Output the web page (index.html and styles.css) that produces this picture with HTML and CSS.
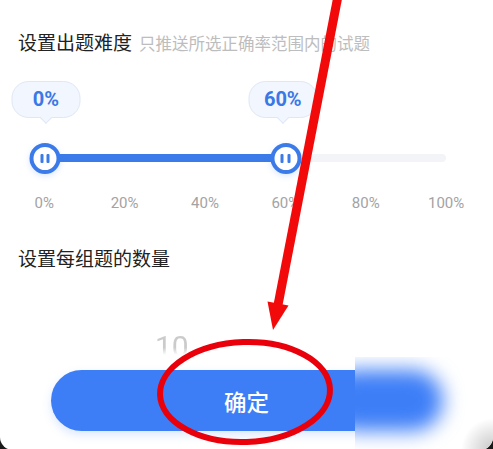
FILE: index.html
```html
<!DOCTYPE html>
<html lang="zh-CN">
<head>
<meta charset="utf-8">
<title>设置</title>
<link rel="stylesheet" href="styles.css">
</head>
<body>
<div class="sheet">
  <div class="section-head">
    <span class="h">设置出题难度</span><span class="sub">只推送所选正确率范围内的试题</span>
  </div>

  <div class="slider">
    <div class="track"><div class="fill" style="width:60%"></div></div>
    <div class="bubble" style="left:0.2%">0%</div>
    <div class="bubble" style="left:59.3%">60%</div>
    <div class="handle" style="left:0%"><i></i><i></i></div>
    <div class="handle" style="left:60%"><i></i><i></i></div>
  </div>

  <div class="ticks">
    <span>0%</span><span>20%</span><span>40%</span><span>60%</span><span>80%</span><span>100%</span>
  </div>

  <div class="section-head second">
    <span class="h">设置每组题的数量</span>
  </div>

  <div class="picker">
    <span class="num">10</span>
  </div>

  <button class="confirm">确定</button>

  <div class="patch"><div class="blob"></div></div>

  <svg class="marks" width="493" height="449" viewBox="0 0 493 449">
    <line x1="338" y1="-4" x2="278" y2="305" stroke="#f20a0a" stroke-width="9"/>
    <polygon points="273,330 288.5,305.5 267.5,301.5" fill="#f20a0a"/>
    <ellipse cx="245" cy="392" rx="85" ry="50" fill="none" stroke="#e9000a" stroke-width="6" transform="rotate(-2 245 392)"/>
  </svg>
</div>
</body>
</html>
```

FILE: styles.css
```css
html, body {
  margin: 0;
  padding: 0;
}

body {
  background: #1a1a1a;
  width: 493px;
  height: 449px;
  overflow: hidden;
  font-family: Roboto, "Noto Sans CJK SC", "Noto Sans", sans-serif;
}

.sheet {
  position: relative;
  width: 493px;
  height: 450px;
  background: #ffffff;
  border-radius: 0 0 13px 13px;
  padding-top: 30px;
  box-sizing: border-box;
  overflow: hidden;
}

.section-head {
  padding-left: 18px;
  line-height: 24px;
  height: 24px;
  white-space: nowrap;
}

.section-head .h {
  font-family: "Noto Sans CJK SC", sans-serif;
  font-size: 19px;
  color: #222222;
}

.section-head .sub {
  font-family: "Noto Sans CJK SC", sans-serif;
  font-size: 16.5px;
  color: #bdbdbd;
  margin-left: 7px;
}

.section-head.second {
  margin-top: 34px;
}

.slider {
  position: relative;
  margin: 27px 47px 0 45px;
  padding-top: 73px;
  padding-bottom: 12px;
}

.track {
  height: 8px;
  background: #f3f4f8;
  border-radius: 4px;
}

.fill {
  height: 8px;
  background: #3b7be9;
  border-radius: 4px;
}

.bubble {
  position: absolute;
  top: 0;
  transform: translateX(-50%);
  width: 69px;
  height: 37px;
  box-sizing: border-box;
  background: #f2f6fe;
  border: 1px solid #dfe7f6;
  border-radius: 17px;
  color: #3a78e6;
  font-weight: 700;
  font-size: 20px;
  line-height: 35px;
  text-align: center;
}

.bubble::after {
  content: "";
  position: absolute;
  left: 50%;
  bottom: -5px;
  width: 8px;
  height: 8px;
  margin-left: -4px;
  background: #f2f6fe;
  border-right: 1px solid #dfe7f6;
  border-bottom: 1px solid #dfe7f6;
  transform: rotate(45deg);
}

.handle {
  position: absolute;
  top: 61.5px;
  width: 31px;
  height: 31px;
  box-sizing: border-box;
  transform: translateX(-50%);
  background: #ffffff;
  border: 4px solid #3b7be9;
  border-radius: 50%;
  box-shadow: 0 2px 6px rgba(59, 123, 233, 0.18);
  display: flex;
  align-items: center;
  justify-content: center;
  gap: 3.5px;
}

.handle i {
  display: block;
  width: 3px;
  height: 9px;
  background: #3b7be9;
  border-radius: 1px;
}

.ticks {
  margin-top: 20px;
  margin-left: 4px;
  display: grid;
  grid-template-columns: repeat(6, 80.4px);
  font-size: 15px;
  line-height: 18px;
  color: #a3a3a3;
  text-align: center;
}

.picker {
  margin-top: 59px;
  padding-left: 155px;
  height: 36px;
}

.num {
  display: inline-block;
  font-size: 30px;
  line-height: 36px;
  color: #cbcbcb;
  -webkit-mask-image: linear-gradient(to bottom, #000 0, #000 52%, transparent 72%);
  mask-image: linear-gradient(to bottom, #000 0, #000 52%, transparent 72%);
}

.confirm {
  position: absolute;
  left: 51px;
  top: 370px;
  width: 391px;
  height: 61px;
  border: none;
  border-radius: 31px;
  background: #3d7ef7;
  box-shadow: 0 4px 10px rgba(61, 126, 247, 0.18);
  color: #ffffff;
  font-family: "Noto Sans CJK SC", sans-serif;
  font-weight: 500;
  font-size: 22.5px;
  padding: 0;
  margin: 0;
}

.patch {
  position: absolute;
  left: 355px;
  top: 357px;
  width: 138px;
  height: 93px;
  overflow: hidden;
  background: radial-gradient(circle at 100% 100%, rgba(0, 0, 0, 0.22), rgba(0, 0, 0, 0) 32px), #ffffff;
}

.blob {
  position: absolute;
  left: -30px;
  top: 13px;
  width: 118px;
  height: 61px;
  border-radius: 31px;
  background: #3d7ef7;
  filter: blur(10px);
}

.marks {
  position: absolute;
  left: 0;
  top: 0;
  pointer-events: none;
}
```
